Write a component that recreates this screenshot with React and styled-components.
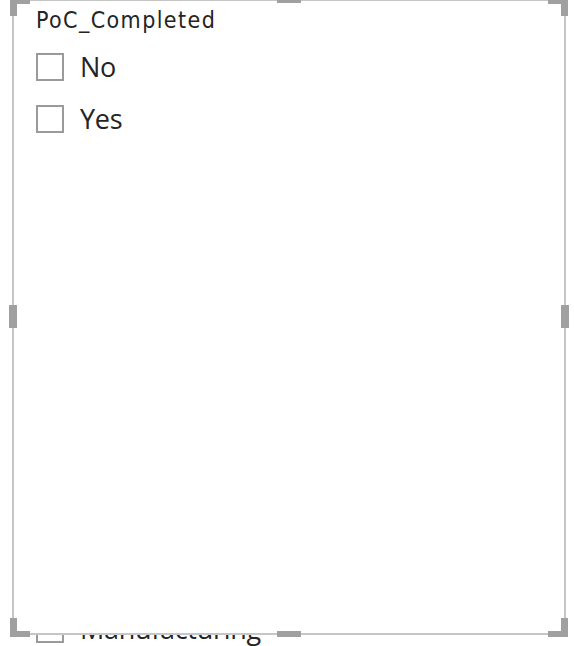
import React from "react";
import styled, { createGlobalStyle } from "styled-components";

const GlobalStyle = createGlobalStyle`
  html, body {
    margin: 0;
    padding: 0;
    background: #ffffff;
    overflow: hidden;
  }
  body {
    font-family: "Open Sans", "Noto Sans", sans-serif;
  }
`;

const Canvas = styled.div`
  position: relative;
  width: 574px;
  height: 646px;
  overflow: hidden;
  background: #ffffff;
`;

// visual sitting behind the selected one, only its bottom peeks out
const BackVisual = styled.div`
  position: absolute;
  left: 14px;
  top: 603px;
  width: 550px;
  padding-left: 22px;
  box-sizing: border-box;
`;

const Frame = styled.div`
  position: absolute;
  left: 12px;
  top: -1px;
  width: 554px;
  height: 636px;
  box-sizing: border-box;
  border: 2px solid #c6c6c6;
  background: #ffffff;
  z-index: 2;
`;

const Body = styled.div`
  display: flex;
  flex-direction: column;
  padding: 4px 0 0 22px;
`;

const Title = styled.div`
  font-family: "DejaVu Sans Condensed", "DejaVu Sans", sans-serif;
  font-size: 23px;
  line-height: 30px;
  color: #252423;
  letter-spacing: 1.4px;
  margin-bottom: 6px;
`;

const List = styled.div`
  display: flex;
  flex-direction: column;
`;

const Item = styled.div`
  display: flex;
  align-items: center;
  gap: 16px;
  height: 52px;
`;

const Box = styled.span`
  width: 28px;
  height: 28px;
  box-sizing: border-box;
  border: 2px solid #9a9a9a;
  background: #ffffff;
  flex: none;
`;

const Label = styled.span`
  font-family: "Open Sans", "Noto Sans", sans-serif;
  font-size: 27px;
  line-height: 36px;
  color: #252423;
  letter-spacing: -0.3px;
`;

const Handle = styled.div`
  position: absolute;
  background: #a0a0a0;
  z-index: 3;
`;

const handles = [
  // corners: horizontal arm + vertical arm
  { left: 10, top: -3, width: 20, height: 7 },
  { left: 10, top: -3, width: 7, height: 19 },
  { left: 548, top: -3, width: 20, height: 7 },
  { left: 561, top: -3, width: 7, height: 19 },
  { left: 10, top: 631, width: 20, height: 6 },
  { left: 10, top: 618, width: 7, height: 19 },
  { left: 548, top: 631, width: 20, height: 6 },
  { left: 561, top: 618, width: 7, height: 19 },
  // edges
  { left: 277, top: -3, width: 24, height: 6 },
  { left: 277, top: 631, width: 24, height: 6 },
  { left: 9, top: 305, width: 8, height: 23 },
  { left: 561, top: 305, width: 8, height: 23 },
];

const items = ["No", "Yes"];

function App() {
  return (
    <Canvas>
      <GlobalStyle />
      <BackVisual>
        <Item>
          <Box />
          <Label>Manufacturing</Label>
        </Item>
      </BackVisual>
      <Frame>
        <Body>
          <Title>PoC_Completed</Title>
          <List>
            {items.map((item) => (
              <Item key={item}>
                <Box />
                <Label>{item}</Label>
              </Item>
            ))}
          </List>
        </Body>
      </Frame>
      {handles.map((h, i) => (
        <Handle
          key={i}
          style={{ left: h.left, top: h.top, width: h.width, height: h.height }}
        />
      ))}
    </Canvas>
  );
}

export default App;
